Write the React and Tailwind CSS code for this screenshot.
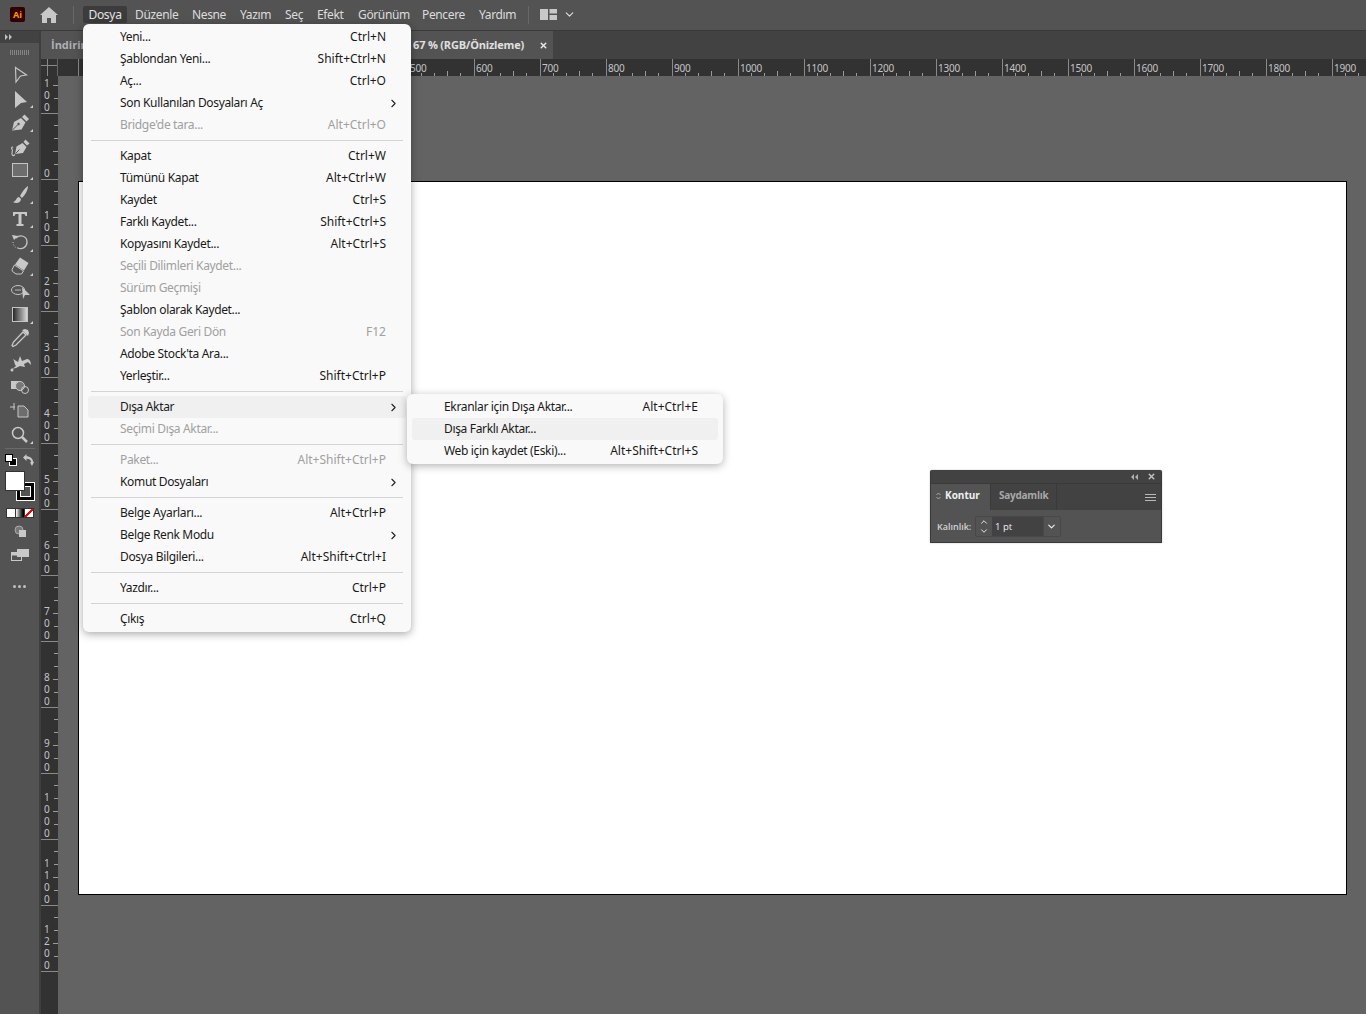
import { ChevronRight, ChevronDown, ChevronUp, X } from "lucide-react";

const topMenus = [
  { label: "Düzenle", w: "w-[57px]" },
  { label: "Nesne", w: "w-[48px]" },
  { label: "Yazım", w: "w-[45px]" },
  { label: "Seç", w: "w-[32px]" },
  { label: "Efekt", w: "w-[41px]" },
  { label: "Görünüm", w: "w-[64px]" },
  { label: "Pencere", w: "w-[57px]" },
  { label: "Yardım", w: "w-[49px]" },
];

const fileMenu = [
  [
    { label: "Yeni...", key: "Ctrl+N" },
    { label: "Şablondan Yeni...", key: "Shift+Ctrl+N" },
    { label: "Aç...", key: "Ctrl+O" },
    { label: "Son Kullanılan Dosyaları Aç", arrow: true },
    { label: "Bridge'de tara...", key: "Alt+Ctrl+O", off: true },
  ],
  [
    { label: "Kapat", key: "Ctrl+W" },
    { label: "Tümünü Kapat", key: "Alt+Ctrl+W" },
    { label: "Kaydet", key: "Ctrl+S" },
    { label: "Farklı Kaydet...", key: "Shift+Ctrl+S" },
    { label: "Kopyasını Kaydet...", key: "Alt+Ctrl+S" },
    { label: "Seçili Dilimleri Kaydet...", off: true },
    { label: "Sürüm Geçmişi", off: true },
    { label: "Şablon olarak Kaydet..." },
    { label: "Son Kayda Geri Dön", key: "F12", off: true },
    { label: "Adobe Stock'ta Ara..." },
    { label: "Yerleştir...", key: "Shift+Ctrl+P" },
  ],
  [
    { label: "Dışa Aktar", arrow: true, active: true },
    { label: "Seçimi Dışa Aktar...", off: true },
  ],
  [
    { label: "Paket...", key: "Alt+Shift+Ctrl+P", off: true },
    { label: "Komut Dosyaları", arrow: true },
  ],
  [
    { label: "Belge Ayarları...", key: "Alt+Ctrl+P" },
    { label: "Belge Renk Modu", arrow: true },
    { label: "Dosya Bilgileri...", key: "Alt+Shift+Ctrl+I" },
  ],
  [{ label: "Yazdır...", key: "Ctrl+P" }],
  [{ label: "Çıkış", key: "Ctrl+Q" }],
];

const exportMenu = [
  { label: "Ekranlar için Dışa Aktar...", key: "Alt+Ctrl+E" },
  { label: "Dışa Farklı Aktar...", active: true },
  { label: "Web için kaydet (Eski)...", key: "Alt+Shift+Ctrl+S" },
];

const Corner = () => <polygon points="25,19 25,22 22,22" fill="#d0d0d0" />;

const tools = [
  <polygon key="a" points="7.5,5.5 18.5,13 12.5,14 8,20" fill="none" stroke="#c4c4c4" strokeWidth="1.2" />,
  <g key="b"><polygon points="7,5 19,16 13,17 7,22" fill="#c8c8c8" /><Corner /></g>,
  <g key="c"><path d="M4 20.500l2-8.500 7-4 4.500 4.500-4 7z" fill="#c8c8c8" /><path d="M14 7l2.500-2.500 4.500 4.500-2.500 2.500z" fill="#c8c8c8" /><path d="M4.500 20l5-5" stroke="#535353" /><circle cx="10.500" cy="14" r="1.200" fill="#535353" /><Corner /></g>,
  <g key="d"><path d="M7 20l1.500-7.500 6-3.500 4 4-3.500 6z" fill="#c8c8c8" /><path d="M15.500 8l2-2.500 4 4-2.500 2z" fill="#c8c8c8" /><path d="M7.500 19.500l4-4" stroke="#535353" /><path d="M7 20.500c-2 2-3 1-3-1 0-2 1-3 0-4.500-1-1 0-3 1-1.500" fill="none" stroke="#c8c8c8" strokeWidth="1.100" /></g>,
  <g key="e"><rect x="4.500" y="5.500" width="15" height="13" fill="#6d6d6d" stroke="#c4c4c4" /><Corner /></g>,
  <g key="f"><path d="M20 4c-3 2-6 6-8 10l2 2c3-3 6-8 6-12zM11 15c-3 0-2 4-6 5 3 2 8 1 8-3z" fill="#c8c8c8" /><Corner /></g>,
  <g key="g"><path d="M5 6h14v4h-1.500l-1-2H13.500v10h2v2H8.500v-2h2V8H7.500l-1 2H5z" fill="#c8c8c8" /><Corner /></g>,
  <g key="h"><path d="M8 8c4-4 11-2 11 4 0 5-5 8-9 6" fill="none" stroke="#c4c4c4" strokeWidth="1.3" /><path d="M5 12c0 3 2 6 5 6" fill="none" stroke="#c4c4c4" strokeDasharray="1 1.500" /><polygon points="4,5 10,6 6,10" fill="#c8c8c8" /><Corner /></g>,
  <g key="i"><path d="M12 3.500l8.500 5.500-4.500 7.500-9-6z" fill="#c8c8c8" /><path d="M6.500 11l9 6-2 3H8l-3.500-2.500-.5-2z" fill="#535353" stroke="#c8c8c8" /><Corner /></g>,
  <g key="j"><ellipse cx="10" cy="12" rx="6.500" ry="4.500" fill="none" stroke="#c4c4c4" /><circle cx="8" cy="12" r=".7" fill="#ddd" /><circle cx="10" cy="12" r=".7" fill="#ddd" /><circle cx="12" cy="12" r=".7" fill="#ddd" /><polygon points="14,9 22,17 17,17 15,21" fill="#c8c8c8" /></g>,
  <g key="k"><rect x="4.500" y="5.500" width="15" height="14" fill="url(#tool-grad)" stroke="#c4c4c4" /><Corner /></g>,
  <g key="l"><path d="M15 6l3 3-10 10-3 1.500-1-1L5.500 16z" fill="none" stroke="#c8c8c8" strokeWidth="1.300" /><path d="M14 4l6 6 1-3-1-3-3-1z" fill="#c8c8c8" /></g>,
  <g key="m"><path d="M3 19c3-1 4-2 5-3-2-2-1-4-3-7l5 3 2-6 2 5 5-2c2 0 4 2 4 6l-3-3-4 2 1 3-5-1-4 2z" fill="#c8c8c8" /><circle cx="4" cy="20" r="1.500" fill="#c8c8c8" /></g>,
  <g key="n"><rect x="3" y="7" width="8" height="8" fill="#c8c8c8" /><circle cx="12" cy="12" r="4.500" fill="#777" stroke="#c8c8c8" /><circle cx="17" cy="16" r="3.500" fill="none" stroke="#c8c8c8" /></g>,
  <g key="o"><path d="M10 8h6l4 4v7H10z" fill="#6d6d6d" stroke="#c8c8c8" /><path d="M2 9h5M6 5v7" stroke="#c8c8c8" /></g>,
  <g key="p"><circle cx="10" cy="11" r="5.500" fill="none" stroke="#c8c8c8" strokeWidth="1.500" /><path d="M14 15l5 5" stroke="#c8c8c8" strokeWidth="2.500" /><Corner /></g>,
];

const ToolIcon = ({ children }) => (
  <div className="h-6 w-[26px] self-start ml-2">
    <svg width="26" height="24" viewBox="0 0 26 24" className="overflow-visible">
      {children}
    </svg>
  </div>
);

const Toolbar = () => (
  <aside className="w-[41px] shrink-0 bg-[#535353] border-r-2 border-[#3e3e3e] flex flex-col items-center">
    <div className="h-3 w-full bg-[#424242] flex items-center pl-[5px]">
      <svg width="8" height="6" viewBox="0 0 8 6">
        <path d="M0 0l3 3-3 3zM4 0l3 3-3 3z" fill="#c0c0c0" />
      </svg>
    </div>
    <div className="h-[19px] flex items-center">
      <div className="w-5 h-[5px] bg-[repeating-linear-gradient(90deg,#858585_0_1px,transparent_1px_2px)]" />
    </div>
    <svg width="0" height="0" className="absolute">
      <defs>
        <linearGradient id="tool-grad">
          <stop offset="0" stopColor="#222" />
          <stop offset="1" stopColor="#ddd" />
        </linearGradient>
      </defs>
    </svg>
    {tools.map((t, i) => (
      <ToolIcon key={i}>{t}</ToolIcon>
    ))}
    <div className="w-[30px] h-px bg-[#6a6a6a] mt-[2px] mb-[5px]" />
    <div className="w-full flex justify-between items-center px-[5px] h-3">
      <div className="relative w-[12px] h-[12px]">
        <div className="absolute right-0 bottom-0 w-2 h-2 bg-black border border-white" />
        <div className="absolute left-0 top-0 w-2 h-2 bg-white border border-black" />
      </div>
      <svg width="12" height="12" viewBox="0 0 12 12">
        <path d="M1 3.500L4.500 0v2.200c3.500 0 6.500 2.500 6.500 5.300L12 8l-2 4-2-3.500 1.200-.5C9 6 7 4.800 4.500 4.800V7z" fill="#c8c8c8" />
      </svg>
    </div>
    <div className="relative w-[30px] h-[30px] mt-[5px] self-start ml-[5px]">
      <div className="absolute right-0 bottom-0 w-[19px] h-[19px] bg-black border border-white flex items-center justify-center">
        <div className="w-[11px] h-[11px] border border-white bg-[#535353]" />
      </div>
      <div className="absolute left-0 top-0 w-5 h-5 bg-white border border-[#333]" />
    </div>
    <div className="flex gap-px mt-[7px] bg-[#333] p-px">
      <div className="w-2 h-2 bg-white" />
      <div className="w-2 h-2 bg-gradient-to-r from-white to-black" />
      <div className="w-2 h-2 bg-[linear-gradient(135deg,white_40%,red_40%,red_60%,white_60%)]" />
    </div>
    <svg width="14" height="14" viewBox="0 0 14 14" className="mt-[6px]">
      <circle cx="6" cy="6" r="4" fill="#777" stroke="#aaa" />
      <rect x="6" y="6" width="7" height="7" fill="#c8c8c8" />
    </svg>
    <svg width="20" height="14" viewBox="0 0 20 14" className="mt-[10px]">
      <rect x="1.500" y="4.500" width="10" height="8" fill="none" stroke="#c8c8c8" />
      <rect x="7" y="1" width="12" height="8" fill="#c8c8c8" />
      <rect x="1.500" y="4.500" width="10" height="3" fill="#c8c8c8" />
    </svg>
    <div className="flex gap-[2px] mt-[23px]">
      <div className="w-[3px] h-[3px] rounded-full bg-[#c0c0c0]" />
      <div className="w-[3px] h-[3px] rounded-full bg-[#c0c0c0]" />
      <div className="w-[3px] h-[3px] rounded-full bg-[#c0c0c0]" />
    </div>
  </aside>
);

// the first five cells sit under the open menu, so their numbers never show
const hLabels = ["", "", "", "", "", 500, 600, 700, 800, 900, 1000, 1100, 1200, 1300, 1400, 1500, 1600, 1700, 1800, 1900];
const vLabels = ["0", "100", "200", "300", "400", "500", "600", "700", "800", "900", "1000", "1100", "1200"];

const HCell = ({ label }) => (
  <div className="relative w-[66px] h-full shrink-0 border-l border-[#8a8a8a] pl-px text-[10px] tracking-[-0.2px] leading-[18px] text-[#c4c4c4]">
    {label}
    <svg width="66" height="5" viewBox="0 0 66 5" className="absolute left-0 bottom-0">
      <path d="M12.500 2v3M25.500 2v3M38.500 0v5M51.500 2v3" stroke="#9a9a9a" />
    </svg>
  </div>
);

const VCell = ({ label, short }) => (
  <div
    className={`relative w-full shrink-0 border-b border-[#8a8a8a] flex flex-col justify-end pl-[3px] text-[10px] leading-[12px] text-[#c4c4c4] ${short ? "h-[38px]" : "h-[66px]"}`}
  >
    {String(label)
      .split("")
      .map((d, i) => (
        <span key={i}>{d}</span>
      ))}
    <svg width="5" height="66" viewBox="0 0 5 66" className="absolute right-0 bottom-0">
      <path d="M1 12.500h4M1 25.500h4M0 38.500h5M1 51.500h4" stroke="#9a9a9a" />
    </svg>
  </div>
);

const Row = ({ item }) => (
  <div
    className={`h-[22px] mx-[5px] rounded-[3px] pl-[32px] flex items-center justify-between ${item.active ? "bg-[#f0f0f0]" : ""} ${item.off ? "text-[#a0a0a0]" : "text-[#1a1a1a]"}`}
  >
    <span className="tracking-[-0.34px]">{item.label}</span>
    {item.key && <span className="pr-[20px]">{item.key}</span>}
    {item.arrow && <ChevronRight size={13} strokeWidth={2} className="mr-[6px] text-[#222]" />}
  </div>
);

const StrokePanel = () => (
  <div className="absolute left-[930px] top-[470px] w-[232px] h-[73px] bg-[#535353] border-x border-b border-[#3a3a3a] rounded-t-[2px] font-['Open_Sans',sans-serif] shadow-[0_0_2px_rgba(0,0,0,0.25)]">
    <div className="h-[13px] bg-[#424242] rounded-t-[2px] flex items-center justify-end gap-[9px] pr-[5px]">
      <svg width="7" height="6" viewBox="0 0 7 6">
        <path d="M3 0L0 3l3 3zM7 0L4 3l3 3z" fill="#b0b0b0" />
      </svg>
      <X size={9} strokeWidth={4} className="text-[#c0c0c0]" />
    </div>
    <div className="h-[27px] bg-[#424242] flex items-stretch border-t border-[#3a3a3a]">
      <div className="w-[59px] bg-[#535353] flex items-center pl-[5px] pb-[3px] gap-[4px] text-[10px] font-bold text-[#f0f0f0]">
        <svg width="5" height="8" viewBox="0 0 5 8">
          <path d="M.5 3l2-2 2 2M.5 5l2 2 2-2" fill="none" stroke="#c0c0c0" strokeWidth=".8" />
        </svg>
        Kontur
      </div>
      <div className="w-[67px] border-x border-[#3a3a3a] flex items-center pl-2 pb-[3px] text-[10px] tracking-[-0.25px] font-bold text-[#a8a8a8]">
        Saydamlık
      </div>
      <div className="flex-1 flex flex-col items-end justify-center gap-[2px] pr-[5px]">
        <div className="w-[11px] h-px bg-[#b8b8b8]" />
        <div className="w-[11px] h-px bg-[#b8b8b8]" />
        <div className="w-[11px] h-px bg-[#b8b8b8]" />
      </div>
    </div>
    <div className="flex items-center pl-[6px] pt-[6px]">
      <span className="w-[38px] pt-px text-[9px] font-semibold text-[#d4d4d4]">Kalınlık:</span>
      <div className="w-[86px] h-[21px] flex items-stretch border border-[#484848] rounded-[2px] text-[9.500px] text-[#f0f0f0]">
        <div className="w-[16px] flex flex-col items-center justify-center -space-y-px text-[#f0f0f0]">
          <ChevronUp size={12} strokeWidth={2.2} />
          <ChevronDown size={12} strokeWidth={2.2} />
        </div>
        <div className="w-[51px] bg-[#424242] flex items-center pl-[3px] pt-px">1 pt</div>
        <div className="flex-1 border-l border-[#484848] flex items-center justify-center pr-[2px]">
          <ChevronDown size={11} strokeWidth={2.5} />
        </div>
      </div>
    </div>
  </div>
);

const App = () => {
  return (
    <div className="relative h-screen overflow-hidden bg-[#636363] flex flex-col font-['Noto_Sans',sans-serif]">
      <header className="h-[31px] shrink-0 bg-[#535353] border-b border-[#3a3a3a] pb-px flex items-center text-[12px] text-[#dcdcdc]">
        <div className="w-[15px] h-[15px] ml-[10px] rounded-[2px] bg-[#330000] text-[#ff9a00] text-[9px] font-bold leading-[15px] text-center">
          Ai
        </div>
        <svg width="18" height="16" viewBox="0 0 18 16" className="ml-[15px]">
          <path d="M9 0l9 8h-2v8h-5v-5H7v5H2V8H0z" fill="#c8c8c8" />
        </svg>
        <div className="w-px h-[18px] bg-[#686868] ml-[15px]" />
        <div className="ml-[9px] w-[44px] h-[17px] bg-[#3c3c3c] rounded-[2px] text-center leading-[17px] tracking-[-0.3px] text-[#e4e4e4]">
          Dosya
        </div>
        <nav className="flex ml-2 tracking-[-0.36px]">
          {topMenus.map((m) => (
            <span key={m.label} className={`${m.w} shrink-0`}>
              {m.label}
            </span>
          ))}
        </nav>
        <div className="w-px h-[18px] bg-[#686868]" />
        <svg width="17" height="11" viewBox="0 0 17 11" className="ml-[11px]">
          <path d="M0 0h8v11H0zM9.500 0H17v4.500H9.500zM9.500 6H17v5H9.500z" fill="#c8c8c8" />
        </svg>
        <ChevronDown size={13} strokeWidth={2} className="ml-[6px] text-[#e0e0e0]" />
      </header>

      <div className="flex-1 flex min-h-0">
        <Toolbar />
        <div className="flex-1 flex flex-col min-w-0">
          <div className="h-[28px] shrink-0 bg-[#424242] flex">
            <div className="w-[512px] bg-[#535353] flex items-center justify-between pl-[10px] pr-[5px] text-[11px] font-['Open_Sans',sans-serif] font-bold">
              <span className="text-[#b0b0b0]">İndirim</span>
              <span className="flex items-center gap-[15px] text-[#e0e0e0] tracking-[-0.2px]">
                67 % (RGB/Önizleme)
                <X size={9} strokeWidth={4} className="text-[#e8e8e8]" />
              </span>
            </div>
          </div>
          <div className="h-[17px] shrink-0 bg-[#323232] flex overflow-hidden">
            <div className="w-[17px] h-full shrink-0 border-r border-[#666] relative">
              <div className="absolute left-0 right-0 top-[6px] h-px bg-[#888]" />
              <div className="absolute left-[6px] top-0 bottom-0 w-px bg-[#888]" />
            </div>
            <div className="w-[20px] shrink-0" />
            {hLabels.map((l, i) => (
              <HCell key={i} label={l} />
            ))}
          </div>
          <div className="flex-1 flex min-h-0">
            <div className="w-[17px] shrink-0 bg-[#323232] overflow-hidden">
              <VCell label="100" short />
              {vLabels.map((l) => (
                <VCell key={l} label={l} />
              ))}
            </div>
            <main className="flex-1 pl-[20px] pr-[19px] pt-[105px]">
              <div className="h-[714px] bg-white border border-black" />
            </main>
          </div>
        </div>
      </div>

      <StrokePanel />

      <div className="absolute left-[83px] top-[24px] w-[328px] h-[608px] bg-[#f9f9f9] rounded-[6px] shadow-[0_2px_8px_rgba(0,0,0,0.35)] py-[2px] text-[12px]">
        {fileMenu.map((group, i) => (
          <div key={i}>
            {i > 0 && <div className="h-px bg-[#d4d4d4] mx-[8px] my-[4px]" />}
            {group.map((item) => (
              <Row key={item.label} item={item} />
            ))}
          </div>
        ))}
      </div>

      <div className="absolute left-[407px] top-[394px] w-[316px] h-[70px] bg-[#f9f9f9] rounded-[6px] shadow-[0_2px_8px_rgba(0,0,0,0.3)] py-[2px] text-[12px] text-[#1a1a1a]">
        {exportMenu.map((item) => (
          <div
            key={item.label}
            className={`h-[22px] mx-[5px] rounded-[3px] pl-[32px] pr-[20px] flex items-center justify-between ${item.active ? "bg-[#f0f0f0]" : ""}`}
          >
            <span className="tracking-[-0.34px]">{item.label}</span>
            {item.key && <span>{item.key}</span>}
          </div>
        ))}
      </div>
    </div>
  );
};

export default App;
